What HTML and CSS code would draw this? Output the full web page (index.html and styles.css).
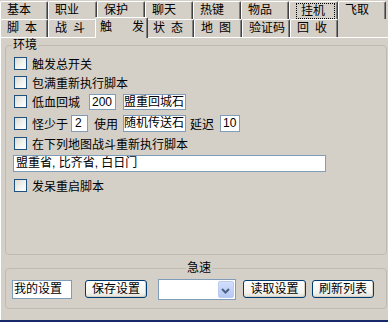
FILE: index.html
```html
<!DOCTYPE html>
<html>
<head>
<meta charset="utf-8">
<link rel="stylesheet" href="styles.css">
</head>
<body>
<div class="window">
  <div class="tabrow row1">
    <div class="tab">基本</div>
    <div class="tab w49">职业</div>
    <div class="tab">保护</div>
    <div class="tab">聊天</div>
    <div class="tab">热键</div>
    <div class="tab">物品</div>
    <div class="tab w49 focus"><span class="focusbox">挂机</span></div>
    <div class="tab">飞取</div>
  </div>
  <div class="tabrow row2">
    <div class="tab">脚&ensp;本</div>
    <div class="tab w49">战&ensp;斗</div>
    <div class="tab active"><span class="c1">触</span>发</div>
    <div class="tab">状&ensp;态</div>
    <div class="tab">地&ensp;图</div>
    <div class="tab">验证码</div>
    <div class="tab">回&ensp;收</div>
  </div>
  <div class="panel">
    <fieldset class="group env">
      <legend>环境</legend>
      <div class="row r1"><span class="cb"></span>触发总开关</div>
      <div class="row r2"><span class="cb"></span>包满重新执行脚本</div>
      <div class="row r3"><span class="cb"></span>低血回城<span class="field f200">200</span><span class="field box b1">盟重回城石</span></div>
      <div class="row r4"><span class="cb"></span>怪少于<span class="field f2">2</span><span class="lbl use">使用</span><span class="field box b2">随机传送石</span><span class="lbl delay">延迟</span><span class="field f10">10</span></div>
      <div class="row r5"><span class="cb"></span>在下列地图战斗重新执行脚本</div>
      <div class="field maps">盟重省, 比齐省, 白日门</div>
      <div class="row r7"><span class="cb"></span>发呆重启脚本</div>
    </fieldset>
    <fieldset class="group speed">
      <legend>急速</legend>
      <div class="row brow">
        <span class="field name">我的设置</span>
        <span class="btn save">保存设置</span>
        <span class="field select"><span class="drop"><svg width="15" height="17" viewBox="0 0 15 17"><polyline points="4,7 7.5,10.5 11,7" fill="none" stroke="#4d6185" stroke-width="2"/></svg></span></span>
        <span class="btn load">读取设置</span>
        <span class="btn refresh">刷新列表</span>
      </div>
    </fieldset>
  </div>
  <div class="taskbar"></div>
</div>
</body>
</html>
```

FILE: styles.css
```css
* { box-sizing: border-box; }
html, body { margin: 0; padding: 0; }
body {
  background: #d4d0c8;
  font-family: "Liberation Sans", "Noto Sans CJK SC", sans-serif;
  font-size: 12px;
  color: #000;
  width: 388px;
  height: 322px;
  overflow: hidden;
}
.window { width: 388px; height: 322px; display: flex; flex-direction: column; }

.tabrow { display: flex; }
.row1 { height: 19px; padding-top: 1px; }
.row2 { height: 18px; }
.tab {
  width: 48px;
  height: 18px;
  line-height: 17px;
  padding-left: 6px;
  background: #d4d0c8;
  border-top: 1px solid #fff;
  border-left: 1px solid #fff;
  border-right: 1px solid #404040;
  box-shadow: inset -1px 0 #808080;
  border-radius: 2px 2px 0 0;
  white-space: nowrap;
}
.w49 { width: 49px; }
.row1 .tab { padding-left: 6px; }
.row2 .tab { padding-left: 6px; }
.focus { padding: 1px 2px 0 1px; }
.focusbox {
  display: block;
  height: 16px;
  line-height: 14px;
  border: 1px dotted #000;
  padding-left: 4px;
}
.tab.active {
  width: 53px;
  height: 21px;
  margin: -2px -2px -1px -2px;
  padding-left: 4px;
  line-height: 19px;
  position: relative;
  z-index: 1;
}
.c1 { margin-right: 20px; }

.panel {
  flex: 1;
  border-top: 1px solid #fff;
  border-left: 1px solid #fff;
  display: flex;
  flex-direction: column;
}

.group {
  margin: 0 0 0 4px;
  width: 382px;
  border: 1px solid #bfbbb0;
  border-radius: 4px;
  min-width: 0;
}
.group legend {
  padding: 0 1px;
  line-height: 14px;
  height: 14px;
  margin-left: -2px;
}
.env { padding: 0 0 59px 8px; }
.speed { margin-top: 6px; padding: 0 0 9px 6px; }
.speed legend { margin: 0 auto; }

.row { display: flex; align-items: center; height: 19px; white-space: nowrap; }
.r1 { margin-top: 2px; }
.r4 { margin-top: 3px; }
.r5 { margin-top: 1px; }
.r7 { margin-top: 4px; }

.cb {
  width: 13px;
  height: 13px;
  border: 1px solid #1c5180;
  background: linear-gradient(135deg, #dcdcd7 0%, #f4f4f0 60%, #fff 100%);
  margin-right: 5px;
  flex: none;
}

.field {
  background: #fff;
  border: 1px solid #7f9db9;
  height: 16px;
  line-height: 14px;
  padding-left: 2px;
  display: inline-block;
}
.f200 { width: 27px; margin-left: 9px; }
.b1 { width: 63px; margin-left: 7px; padding-left: 0; }
.f2 { width: 17px; margin-left: 3px; height: 17px; line-height: 15px; padding-left: 3px; }
.use { margin-left: 6px; }
.b2 { width: 63px; margin-left: 5px; padding-left: 0; height: 17px; line-height: 15px; }
.delay { margin-left: 4px; }
.f10 { width: 20px; margin-left: 6px; height: 17px; line-height: 15px; padding-left: 2px; }
.maps {
  display: block;
  width: 313px;
  height: 17px;
  line-height: 15px;
  margin: 2px 0 0 -1px;
  padding-left: 2px;
}

.brow { height: 20px; margin-top: 4px; }
.name { width: 60px; height: 19px; line-height: 17px; padding-left: 1px; }
.btn {
  display: inline-block;
  height: 18px;
  line-height: 16px;
  text-align: center;
  border: 1px solid #003c74;
  border-radius: 3px;
  background: linear-gradient(#ffffff, #f4f3ee 70%, #e3e1d6);
  box-shadow: inset -1px -1px 0 #d6d0c5;
}
.save { width: 62px; margin-left: 13px; }
.select { width: 78px; height: 21px; margin-left: 11px; padding: 1px 1px 1px 0; display: flex; justify-content: flex-end; }
.drop {
  width: 16px;
  height: 17px;
  display: block;
  border-radius: 2px;
  background: linear-gradient(#d2defc, #b6c9f5);
  border: 1px solid #bccbf0;
}
.drop svg { display: block; margin: 0 0 0 -1px; }
.load { width: 63px; margin-left: 7px; }
.refresh { width: 62px; margin-left: 6px; }

.taskbar { height: 2px; background: #14286a; margin-top: auto; }
```
